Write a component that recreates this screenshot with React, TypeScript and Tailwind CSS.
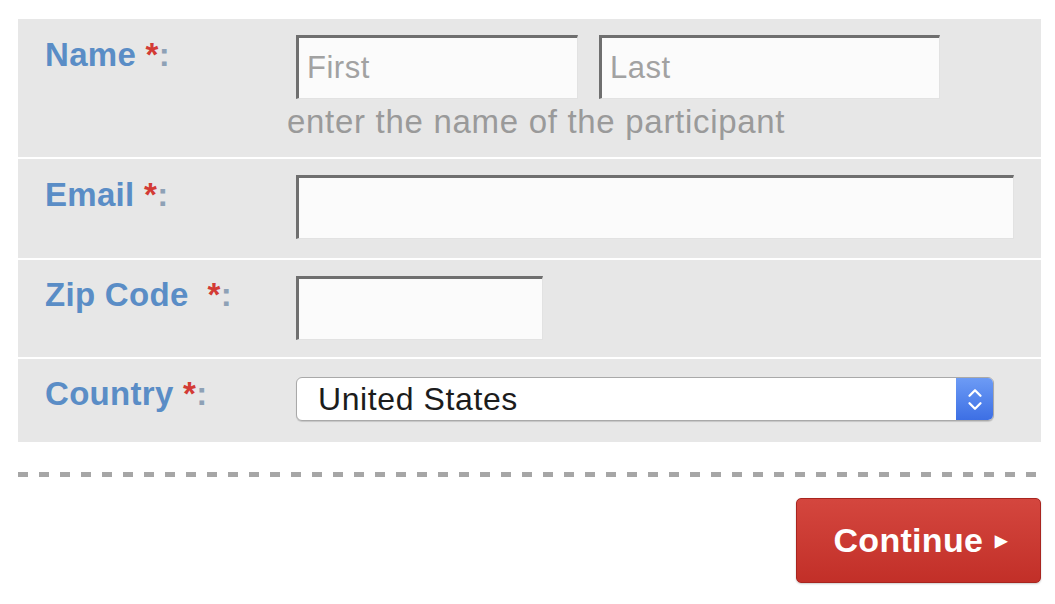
import { ChevronDown, ChevronUp } from "lucide-react";

const font = "font-['Liberation_Sans','Helvetica',Arial,sans-serif]";

function Label({ text, gap = "" }: { text: string; gap?: string }) {
  return (
    <div className="w-[278px] shrink-0 whitespace-pre pl-[27px] text-[33px] font-bold leading-none tracking-[0.3px] text-[#5a8dc6]">
      {text}
      {gap}
      <span className="text-[#d33b35]"> *</span>
      <span className="text-[#8ea1b6]">:</span>
    </div>
  );
}

function TextBox({ width, placeholder }: { width: string; placeholder?: string }) {
  return (
    <input
      placeholder={placeholder}
      className={`${width} h-[64px] border-t-[3px] border-l-[3px] border-r border-b border-t-[#6f6f6f] border-l-[#6f6f6f] border-r-[#e2e2e2] border-b-[#e2e2e2] bg-[#fbfbfb] px-[8px] text-[31px] tracking-[0.5px] text-[#333] outline-none placeholder:text-[#a2a2a2]`}
    />
  );
}

export default function App() {
  return (
    <div className={`min-h-[604px] w-[1055px] bg-white pl-[18px] pt-[19px] ${font}`}>
      <div className="flex w-[1023px] flex-col gap-[2px] bg-white">
        <div className="flex h-[138px] items-start bg-[#e7e7e7]">
          <div className="pt-[19px]">
            <Label text="Name" />
          </div>
          <div className="pt-[16px]">
            <div className="flex gap-[21px]">
              <TextBox width="w-[282px]" placeholder="First" />
              <TextBox width="w-[341px]" placeholder="Last" />
            </div>
            <p className="-ml-[9px] mt-[6px] text-[33px] leading-none tracking-[0.7px] text-[#9a9a9a]">
              enter the name of the participant
            </p>
          </div>
        </div>

        <div className="flex h-[99px] items-start bg-[#e7e7e7]">
          <div className="pt-[19px]">
            <Label text="Email" />
          </div>
          <div className="pt-[16px]">
            <TextBox width="w-[718px]" />
          </div>
        </div>

        <div className="flex h-[97px] items-start bg-[#e7e7e7]">
          <div className="pt-[18px]">
            <Label text="Zip Code" gap=" " />
          </div>
          <div className="pt-[16px]">
            <TextBox width="w-[247px]" />
          </div>
        </div>

        <div className="flex h-[83px] items-start bg-[#e7e7e7]">
          <div className="pt-[18px]">
            <Label text="Country" />
          </div>
          <div className="pt-[18px]">
            <div className="flex h-[44px] w-[698px] items-stretch overflow-hidden rounded-[6px] border border-[#a9a9a9] bg-white shadow-[0_1px_1px_rgba(0,0,0,0.15)]">
              <div className="flex flex-1 items-center pl-[21px] text-[32px] leading-none tracking-[0.6px] text-[#1c1c1c]">
                United States
              </div>
              <div className="flex w-[37px] flex-col items-center justify-center bg-gradient-to-b from-[#6d9bf5] to-[#3d6fe4] text-white">
                <ChevronUp className="-mb-[9px] h-[22px] w-[22px]" strokeWidth={2.5} />
                <ChevronDown className="h-[22px] w-[22px]" strokeWidth={2.5} />
              </div>
            </div>
          </div>
        </div>
      </div>

      <div className="mt-[30px] h-[5px] w-[1023px] bg-[repeating-linear-gradient(to_right,#a6a6a6_0,#a6a6a6_10px,transparent_10px,transparent_21px)]" />

      <div className="mt-[21px] flex w-[1023px] justify-end">
        <button className="flex h-[85px] w-[245px] items-center justify-center gap-[12px] rounded-[5px] border border-[#a8251f] bg-gradient-to-b from-[#d4463e] to-[#c22f28] pl-[4px] text-[34px] font-bold tracking-[0.3px] text-white shadow-[0_1px_2px_rgba(0,0,0,0.2)]">
          Continue
          <span className="text-[16px]">▶</span>
        </button>
      </div>
    </div>
  );
}
